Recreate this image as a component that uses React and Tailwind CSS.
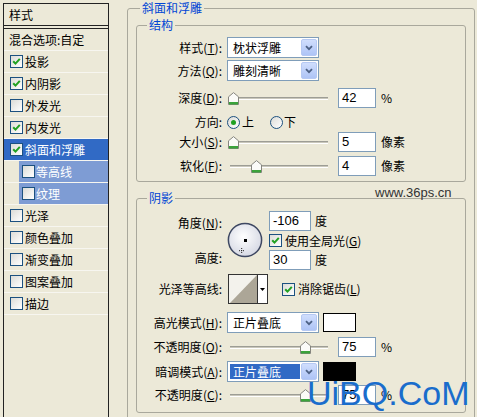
import React from "react"

const effects = [
  { name: "投影", checked: true },
  { name: "内阴影", checked: true },
  { name: "外发光" },
  { name: "内发光", checked: true },
  { name: "斜面和浮雕", checked: true, active: true },
  { name: "等高线", sub: true },
  { name: "纹理", sub: true },
  { name: "光泽" },
  { name: "颜色叠加" },
  { name: "渐变叠加" },
  { name: "图案叠加" },
  { name: "描边" },
]

function Check({ checked }) {
  return (
    <span className="flex h-[13px] w-[13px] shrink-0 items-center justify-center border border-[#1c5180] bg-gradient-to-br from-[#dcdcd7] to-white">
      {checked && (
        <svg width="9" height="9" viewBox="0 0 9 9">
          <path d="M1.2 4.2 L3.5 6.6 L7.8 1.8" fill="none" stroke="#21a121" strokeWidth="2" />
        </svg>
      )}
    </span>
  )
}

function Radio({ checked }) {
  return (
    <span className="flex h-[13px] w-[13px] shrink-0 items-center justify-center rounded-full border border-[#1c5180] bg-gradient-to-br from-[#dcdcd7] to-white">
      {checked && <span className="h-[5px] w-[5px] rounded-full bg-[#21a121]" />}
    </span>
  )
}

function Key({ text, k }) {
  return (
    <>
      {text}(<u>{k}</u>):
    </>
  )
}

function Row({ label, className = "", children }) {
  return (
    <div className={`flex items-center ${className}`}>
      <span className="w-[85px] shrink-0 whitespace-nowrap text-right">{label}</span>
      <div className="ml-[5px] flex items-center">{children}</div>
    </div>
  )
}

function Select({ value, highlighted }) {
  return (
    <div className="flex h-[21px] w-[92px] items-center border border-[#7f9db9] bg-white p-[1px]">
      {highlighted ? (
        <span className="ml-[1px] flex h-[15px] w-[70px] items-center bg-[#316ac5] pl-[3px] text-white">{value}</span>
      ) : (
        <span className="flex-1 pl-[4px]">{value}</span>
      )}
      <span className="ml-auto flex h-full w-[16px] items-center justify-center rounded-[2px] border border-[#b6c9f3] bg-gradient-to-b from-[#d0defd] to-[#aec4f6]">
        <svg width="8" height="6" viewBox="0 0 8 6">
          <path d="M1 1.2 L4 4.2 L7 1.2" fill="none" stroke="#4d6185" strokeWidth="1.8" />
        </svg>
      </span>
    </div>
  )
}

function NumBox({ value, w = 38 }) {
  return (
    <div
      className={`flex h-[20px] items-center border border-[#7f9db9] bg-white pl-[3px] font-['Liberation_Sans',sans-serif] text-[13px] ${
        w === 42 ? "w-[42px]" : "w-[38px]"
      }`}
    >
      {value}
    </div>
  )
}

function Slider({ pos }) {
  return (
    <div className="relative ml-[3px] flex h-[20px] w-[98px] items-center">
      <div className="h-[3px] w-full border-t border-b border-t-[#9d9d95] border-b-white bg-[#c9c7bb]" />
      <svg className="absolute top-[4px]" style={{ left: pos }} width="11" height="13" viewBox="0 0 11 13">
        <path d="M0.5 4.8 L5.5 0.6 L10.5 4.8 V12.5 H0.5 Z" fill="#fbfbf8" stroke="#85857e" />
        <rect x="1" y="10" width="9" height="2.5" fill="#3ba33b" />
      </svg>
    </div>
  )
}

function SliderRow({ label, pos, value, unit, className }) {
  return (
    <Row label={label} className={`h-[20px] ${className}`}>
      <Slider pos={pos} />
      <div className="ml-[10px]">
        <NumBox value={value} />
      </div>
      <span className="ml-[5px]">{unit}</span>
    </Row>
  )
}

function Dial() {
  return (
    <svg width="36" height="36" viewBox="0 0 36 36">
      <defs>
        <radialGradient id="dialFill" cx="45%" cy="40%" r="65%">
          <stop offset="0" stopColor="#ffffff" />
          <stop offset="1" stopColor="#d3d6e2" />
        </radialGradient>
      </defs>
      <circle cx="18" cy="18" r="16.6" fill="url(#dialFill)" stroke="#3e4862" strokeWidth="1.5" />
      <rect x="17" y="17" width="3" height="3" fill="#000" />
      <path d="M12 28.7 H17.5 M14.7 26 V31.5" stroke="#222" strokeWidth="1" strokeDasharray="1 1" />
    </svg>
  )
}

function Contour() {
  return (
    <div className="flex h-[30px] w-[40px] border border-[#333] bg-white">
      <div className="flex w-[29px] items-center justify-center border-r border-[#333] bg-[#f3f2ec]">
        <svg width="27" height="28" viewBox="0 0 27 28">
          <polygon points="0,28 27,0 27,28" fill="#aca697" />
        </svg>
      </div>
      <div className="flex flex-1 items-center justify-center">
        <svg width="5" height="3" viewBox="0 0 5 3">
          <polygon points="0,0 5,0 2.5,3" fill="#000" />
        </svg>
      </div>
    </div>
  )
}

function EffectRow({ item }) {
  if (item.sub) {
    return (
      <div className="h-[22px] border-b border-[#f7f6f0]">
        <div className="ml-[15px] flex h-full items-center gap-[1px] bg-[#7e9cd4] pl-[3px] text-white">
          <Check />
          <span>{item.name}</span>
        </div>
      </div>
    )
  }
  return (
    <div
      className={`flex h-[22px] items-center gap-[2px] border-b border-[#f7f6f0] pl-[6px] ${
        item.active ? "bg-[#316ac5] text-white" : ""
      }`}
    >
      <Check checked={item.checked} />
      <span>{item.name}</span>
    </div>
  )
}

export default function App() {
  return (
    <div className="relative flex h-[417px] w-[477px] overflow-hidden bg-[#ece9d8] font-['Noto_Sans_CJK_SC','Liberation_Sans',sans-serif] text-[12px] leading-[16px] text-black">
      <div className="mt-[3px] ml-[3px] h-[430px] w-[106px] shrink-0 border border-[#222]">
        <div className="flex h-[21px] items-center pl-[5px]">样式</div>
        <div className="h-[4px] border-y border-[#222]" />
        <div className="flex h-[22px] items-center border-b border-[#f7f6f0] pl-[5px]">混合选项:自定</div>
        {effects.map((item) => (
          <EffectRow key={item.name} item={item} />
        ))}
      </div>

      <fieldset className="ml-[18px] h-[440px] w-[348px] shrink-0 rounded-[3px] border border-[#a9a89c] px-[8px] pt-[1px]">
        <legend className="ml-[4px] px-[2px] text-[#0046d5]">斜面和浮雕</legend>

        <fieldset className="w-[330px] rounded-[3px] border border-[#a9a89c] pb-[5px]">
          <legend className="ml-[10px] px-[2px] text-[#0046d5]">结构</legend>
          <Row label={<Key text="样式" k="T" />} className="mt-[4px] h-[21px]">
            <Select value="枕状浮雕" />
          </Row>
          <Row label={<Key text="方法" k="Q" />} className="mt-[2px] h-[21px]">
            <Select value="雕刻清晰" />
          </Row>
          <SliderRow label={<Key text="深度" k="D" />} pos={-2} value="42" unit="%" className="mt-[7px]" />
          <Row label="方向:" className="mt-[6px] h-[16px]">
            <Radio checked />
            <span className="ml-[2px]">上</span>
            <span className="ml-[16px]">
              <Radio />
            </span>
            <span className="ml-[1px]">下</span>
          </Row>
          <SliderRow label={<Key text="大小" k="S" />} pos={-2} value="5" unit="像素" className="mt-[2px]" />
          <SliderRow label={<Key text="软化" k="F" />} pos={21} value="4" unit="像素" className="mt-[4px]" />
        </fieldset>

        <fieldset className="mt-[8px] w-[330px] rounded-[3px] border border-[#a9a89c] pt-[5px] pb-[7px]">
          <legend className="ml-[10px] px-[2px] text-[#0046d5]">阴影</legend>

          <div className="flex">
            <div className="flex w-[85px] shrink-0 flex-col text-right">
              <span className="mt-[4px] h-[16px]">
                <Key text="角度" k="N" />
              </span>
              <span className="mt-[19px] h-[16px]">高度:</span>
            </div>
            <div className="mt-[11px] ml-[5px]">
              <Dial />
            </div>
            <div className="ml-[6px] flex flex-col">
              <div className="flex h-[20px] items-center">
                <NumBox value="-106" w={42} />
                <span className="ml-[4px]">度</span>
              </div>
              <div className="mt-[1px] flex h-[17px] items-center gap-[3px]">
                <Check checked />
                <span>
                  使用全局光(<u>G</u>)
                </span>
              </div>
              <div className="mt-[1px] flex h-[20px] items-center">
                <NumBox value="30" w={42} />
                <span className="ml-[4px]">度</span>
              </div>
            </div>
          </div>

          <Row label="光泽等高线:" className="mt-[4px] h-[30px]">
            <div className="ml-[1px]">
              <Contour />
            </div>
            <div className="ml-[14px] flex items-center gap-[3px]">
              <Check checked />
              <span>
                消除锯齿(<u>L</u>)
              </span>
            </div>
          </Row>

          <Row label={<Key text="高光模式" k="H" />} className="mt-[8px] h-[21px]">
            <Select value="正片叠底" />
            <span className="ml-[4px] h-[19px] w-[33px] border border-black bg-white" />
          </Row>
          <SliderRow label={<Key text="不透明度" k="O" />} pos={70} value="75" unit="%" className="mt-[4px]" />
          <Row label={<Key text="暗调模式" k="A" />} className="mt-[4px] h-[21px]">
            <Select value="正片叠底" highlighted />
            <span className="ml-[4px] h-[19px] w-[33px] border border-black bg-black" />
          </Row>
          <SliderRow label={<Key text="不透明度" k="C" />} pos={70} value="75" unit="%" className="mt-[3px]" />
        </fieldset>
      </fieldset>

      <span className="absolute top-[185px] left-[375px] font-['Liberation_Sans',sans-serif] text-[13px] text-[#333]">
        www.36ps.cn
      </span>
      <span className="absolute top-[376px] left-[307px] font-['Liberation_Sans',sans-serif] text-[34px] leading-none text-[#1a6dcc]">
        UiBQ.CoM
      </span>
    </div>
  )
}
